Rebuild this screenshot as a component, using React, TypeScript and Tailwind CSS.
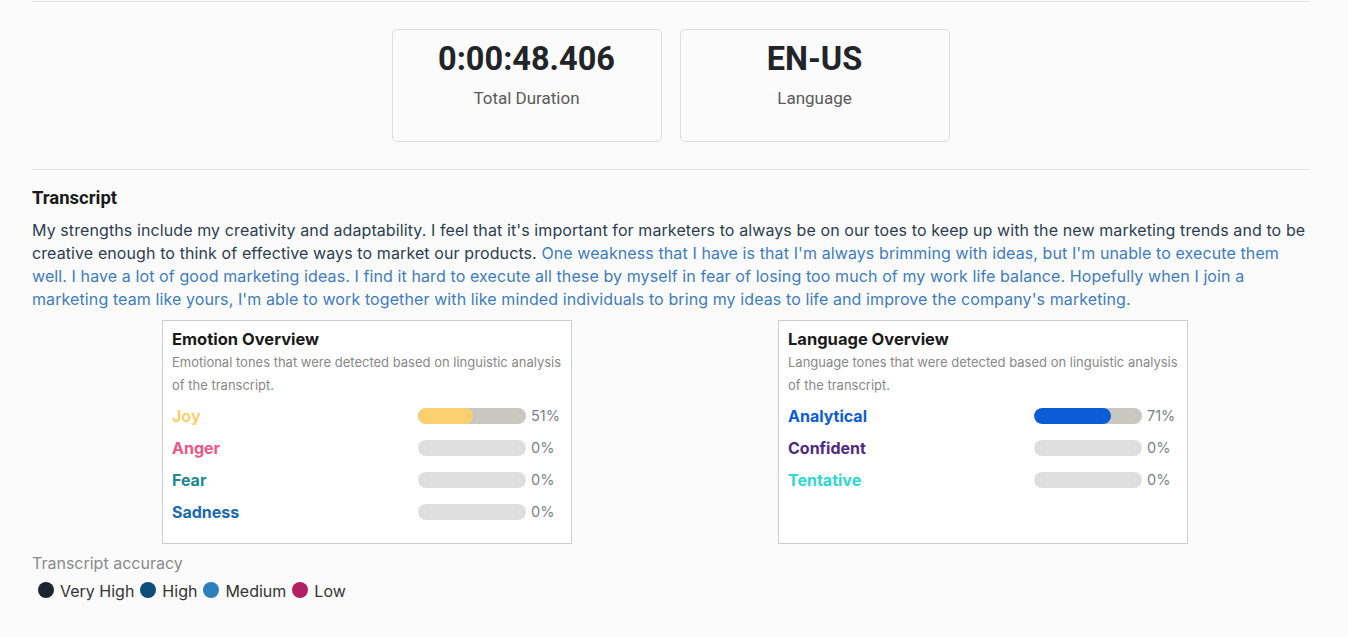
import React from "react";

type Tone = { name: string; color: string; fill: string; value: number };

const emotions: Tone[] = [
  { name: "Joy", color: "text-[#fdcf6f]", fill: "bg-[#fdd06f]", value: 51 },
  { name: "Anger", color: "text-[#ee5682]", fill: "bg-[#ee5682]", value: 0 },
  { name: "Fear", color: "text-[#1d8794]", fill: "bg-[#1d8794]", value: 0 },
  { name: "Sadness", color: "text-[#1c69ad]", fill: "bg-[#1c69ad]", value: 0 },
];

const languages: Tone[] = [
  { name: "Analytical", color: "text-[#0b5cd7]", fill: "bg-[#0b5cd7]", value: 71 },
  { name: "Confident", color: "text-[#4e2a80]", fill: "bg-[#4e2a80]", value: 0 },
  { name: "Tentative", color: "text-[#2dd8d1]", fill: "bg-[#2dd8d1]", value: 0 },
];

function StatCard({ value, label }: { value: string; label: string }) {
  return (
    <div className="w-[270px] h-[113px] border border-[#dedede] rounded-[5px] flex flex-col items-center pt-[10px] font-['Roboto',sans-serif]">
      <div className="text-[32.5px] leading-[38px] font-bold text-[#212529]">{value}</div>
      <div className="text-[17px] leading-[20px] text-[#5a5a5a] mt-[10px]">{label}</div>
    </div>
  );
}

function Overview({ title, desc, tones }: { title: string; desc: string; tones: Tone[] }) {
  return (
    <div className="w-[410px] h-[224px] border border-[#cccccc] bg-white px-[9px] pt-[7px]">
      <div className="text-[16.5px] leading-[22px] font-bold text-[#1a1a1a]">{title}</div>
      <div className="text-[13px] leading-[23px] text-[#888] mt-[1px]">{desc}</div>
      <div className="flex flex-col mt-[3px]">
        {tones.map((t) => (
          <div key={t.name} className="flex items-center h-[32px]">
            <div className={"w-[246px] text-[16px] font-bold " + t.color}>{t.name}</div>
            <div className={"w-[108px] h-[16px] rounded-full overflow-hidden " + (t.value > 0 ? "bg-[#c9c8c0]" : "bg-[#dedede]")}>
              <div className={"h-full rounded-full " + t.fill} style={{ width: `${t.value}%` }} />
            </div>
            <div className="ml-[5px] text-[14.5px] text-[#7a7f87]">{t.value}%</div>
          </div>
        ))}
      </div>
    </div>
  );
}

export default function App() {
  const legend = [
    { label: "Very High", color: "bg-[#1b2631]" },
    { label: "High", color: "bg-[#0f4c7a]" },
    { label: "Medium", color: "bg-[#2e80bd]" },
    { label: "Low", color: "bg-[#b31e64]" },
  ];
  return (
    <div className="min-h-[637px] bg-[#fbfbfb] font-['Inter',sans-serif]">
      <div className="mx-[32px] w-[1277px] pt-[1px]">
        <div className="border-t border-[#e2e2e2]" />
        <div className="flex justify-center gap-[18px] mt-[27px]">
          <StatCard value="0:00:48.406" label="Total Duration" />
          <StatCard value="EN-US" label="Language" />
        </div>
        <div className="border-t border-[#e2e2e2] mt-[27px]" />
        <h2 className="mt-[17px] text-[18.5px] leading-[22px] font-bold text-[#1a1a1a] font-['Roboto',sans-serif]">Transcript</h2>
        <p className="mt-[10px] text-[16px] leading-[23px] tracking-[0.1px]">
          <span className="text-[#2c3e50]">
            My strengths include my creativity and adaptability. I feel that it's important for marketers to always be on our toes to keep up with the new marketing trends and to be creative enough to think of effective ways to market our products.
          </span>{" "}
          <span className="text-[#3e7dbb]">
            One weakness that I have is that I'm always brimming with ideas, but I'm unable to execute them well. I have a lot of good marketing ideas. I find it hard to execute all these by myself in fear of losing too much of my work life balance. Hopefully when I join a marketing team like yours, I'm able to work together with like minded individuals to bring my ideas to life and improve the company's marketing.
          </span>
        </p>
        <div className="flex gap-[206px] pl-[130px] mt-[9px]">
          <Overview
            title="Emotion Overview"
            desc="Emotional tones that were detected based on linguistic analysis of the transcript."
            tones={emotions}
          />
          <Overview
            title="Language Overview"
            desc="Language tones that were detected based on linguistic analysis of the transcript."
            tones={languages}
          />
        </div>
        <div className="mt-[8px] text-[16px] leading-[22px] text-[#8a8a8a]">Transcript accuracy</div>
        <div className="flex items-center mt-[5px] ml-[6px] text-[16px] text-[#333]">
          {legend.map((l) => (
            <div key={l.label} className="flex items-center mr-[6px]">
              <span className={"w-[16px] h-[16px] rounded-full -mt-[3px] " + l.color} />
              <span className="ml-[6px]">{l.label}</span>
            </div>
          ))}
        </div>
      </div>
    </div>
  );
}
